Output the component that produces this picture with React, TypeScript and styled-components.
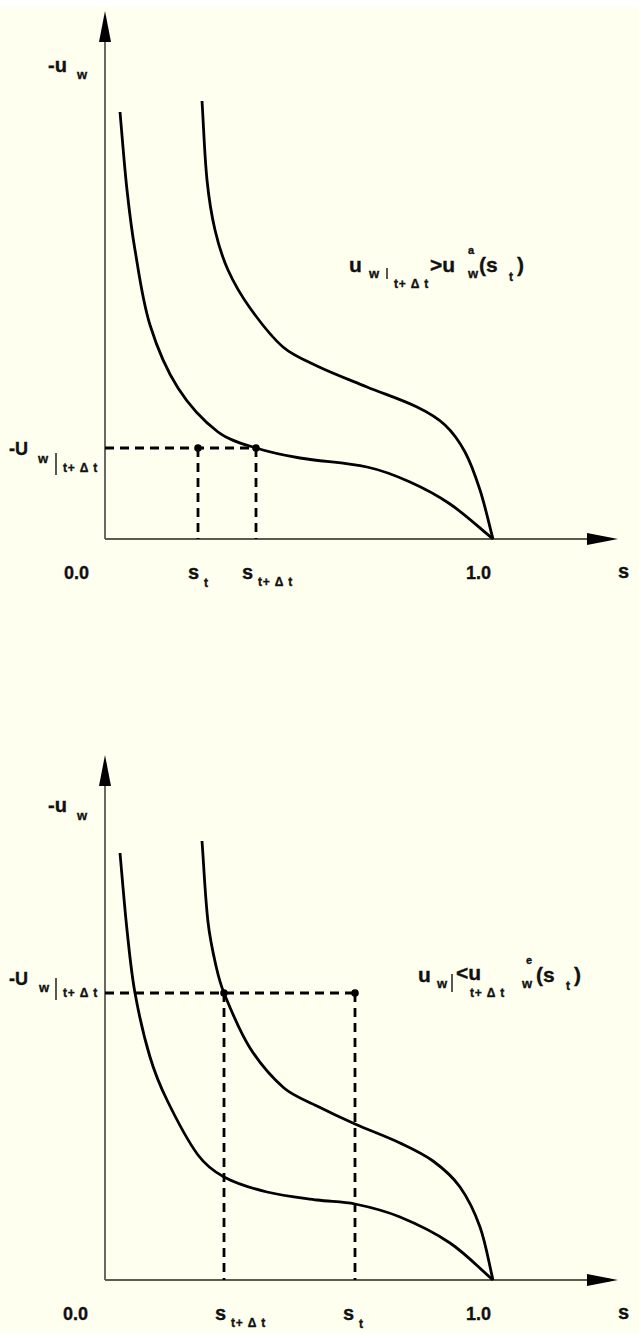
import styled, { createGlobalStyle } from "styled-components";

type Pt = [number, number];

const GlobalStyle = createGlobalStyle`
  body {
    margin: 0;
    background: #ffffff;
  }
`;

const Page = styled.div`
  margin-top: 7px;
  width: 639px;
  height: 1326px;
  overflow: hidden;
  background: #fffff0;
  display: flex;
  flex-direction: column;
`;

const Figure = styled.svg`
  display: block;
  flex: none;
`;

const Label = styled.text<{ $size: number; $spacing?: number }>`
  font-family: "Liberation Sans", Arial, sans-serif;
  font-weight: bold;
  font-size: ${(p) => p.$size}px;
  letter-spacing: ${(p) => p.$spacing ?? 0}px;
  fill: #111;
  stroke: #111;
  stroke-width: 0.35;
`;

const Curve = styled.path`
  fill: none;
  stroke: #000;
  stroke-width: 2.8;
  stroke-linejoin: round;
`;

const Guide = styled.line`
  stroke: #000;
  stroke-width: 2.8;
  stroke-dasharray: 9 6;
`;

const Axis = styled.line<{ $muted?: boolean }>`
  stroke: ${(p) => (p.$muted ? "#5c5c4c" : "#1a1a1a")};
  stroke-width: ${(p) => (p.$muted ? 2 : 1.3)};
`;

const Bar = styled.line`
  stroke: #111;
  stroke-width: 1.4;
`;

const dist = (a: Pt, b: Pt) => Math.hypot(b[0] - a[0], b[1] - a[1]);

// chord-length spline through the points, as cubic beziers
function smooth(pts: Pt[]) {
  const tangent = (i: number): Pt => {
    const a = pts[Math.max(i - 1, 0)];
    const b = pts[Math.min(i + 1, pts.length - 1)];
    const len = dist(a, pts[i]) + dist(pts[i], b);
    return [(b[0] - a[0]) / len, (b[1] - a[1]) / len];
  };
  let d = `M${pts[0][0]},${pts[0][1]}`;
  for (let i = 0; i < pts.length - 1; i++) {
    const p1 = pts[i];
    const p2 = pts[i + 1];
    const h = dist(p1, p2) / 3;
    const t1 = tangent(i);
    const t2 = tangent(i + 1);
    const c1: Pt = [p1[0] + t1[0] * h, p1[1] + t1[1] * h];
    const c2: Pt = [p2[0] - t2[0] * h, p2[1] - t2[1] * h];
    d += ` C${c1[0].toFixed(1)},${c1[1].toFixed(1)} ${c2[0].toFixed(1)},${c2[1].toFixed(1)} ${p2[0]},${p2[1]}`;
  }
  return d;
}

const AXIS_X = 105;

function Axes({ top, base }: { top: number; base: number }) {
  return (
    <g>
      <Axis x1={AXIS_X} y1={top + 28} x2={AXIS_X} y2={base} />
      <polygon points={`${AXIS_X},${top} ${AXIS_X - 6},${top + 31} ${AXIS_X + 6},${top + 31}`} fill="#000" />
      <Axis $muted x1={AXIS_X} y1={base} x2={590} y2={base} />
      <polygon points={`618,${base} 587,${base - 6} 587,${base + 6}`} fill="#000" />
    </g>
  );
}

function Dot({ x, y }: { x: number; y: number }) {
  return <circle cx={x} cy={y} r={3.8} fill="#000" />;
}

const upperLeft: Pt[] = [
  [120, 112], [127, 190], [135, 250], [150, 325], [178, 388], [218, 432],
  [256, 448], [300, 458], [367, 467], [410, 482], [450, 504], [493, 539],
];
const upperRight: Pt[] = [
  [202, 101], [207, 180], [215, 230], [228, 270], [250, 308], [283, 347],
  [317, 366], [367, 387], [417, 407], [445, 425], [465, 452], [480, 490],
  [493, 539],
];
const lowerLeft: Pt[] = [
  [120, 853], [127, 930], [135, 993], [150, 1057], [167, 1100], [198, 1155],
  [224, 1177], [267, 1192], [317, 1200], [355, 1204], [400, 1217], [450, 1243],
  [493, 1280],
];
const lowerRight: Pt[] = [
  [202, 841], [208, 922], [216, 966], [224, 993], [250, 1048], [284, 1088],
  [317, 1106], [355, 1124], [400, 1143], [433, 1161], [460, 1187], [480, 1227],
  [493, 1280],
];

function Sub({ x, y }: { x: number; y: number }) {
  return (
    <Label x={x} y={y} $size={12} $spacing={0.8}>
      t+ Δ t
    </Label>
  );
}

function UpperPlot() {
  return (
    <Figure width={639} height={741} viewBox="0 7 639 741">
      <Axes top={11} base={539} />
      <Curve d={smooth(upperLeft)} />
      <Curve d={smooth(upperRight)} />
      <Guide x1={AXIS_X} y1={448} x2={256} y2={448} />
      <Guide x1={198} y1={448} x2={198} y2={539} />
      <Guide x1={256} y1={448} x2={256} y2={539} />
      <Dot x={198} y={448} />
      <Dot x={256} y={448} />

      <Label x={48} y={72} $size={20}>-u</Label>
      <Label x={77} y={79} $size={13}>w</Label>

      <Label x={9} y={455} $size={18}>-U</Label>
      <Label x={38} y={463} $size={13}>w</Label>
      <Bar x1={56} y1={453} x2={56} y2={475} />
      <Sub x={63} y={472} />

      <Label x={64} y={579} $size={18}>0.0</Label>
      <Label x={188} y={579} $size={20}>s</Label>
      <Label x={204} y={587} $size={12}>t</Label>
      <Label x={242} y={579} $size={20}>s</Label>
      <Sub x={258} y={586} />
      <Label x={466} y={579} $size={18}>1.0</Label>
      <Label x={618} y={578} $size={20}>s</Label>

      <Label x={349} y={272} $size={21}>u</Label>
      <Label x={369} y={278} $size={13}>w</Label>
      <Bar x1={387} y1={268} x2={387} y2={279} />
      <Sub x={394} y={288} />
      <Label x={430} y={272} $size={21}>&gt;u</Label>
      <Label x={468} y={254} $size={11}>a</Label>
      <Label x={468} y={278} $size={13}>w</Label>
      <Label x={479} y={272} $size={21}>(s</Label>
      <Label x={509} y={281} $size={12}>t</Label>
      <Label x={517} y={272} $size={21}>)</Label>
    </Figure>
  );
}

function LowerPlot() {
  return (
    <Figure width={639} height={585} viewBox="0 748 639 585">
      <Axes top={755} base={1280} />
      <Curve d={smooth(lowerLeft)} />
      <Curve d={smooth(lowerRight)} />
      <Guide x1={AXIS_X} y1={993} x2={355} y2={993} />
      <Guide x1={224} y1={993} x2={224} y2={1280} />
      <Guide x1={355} y1={993} x2={355} y2={1280} />
      <Dot x={224} y={993} />
      <Dot x={355} y={993} />

      <Label x={48} y={812} $size={20}>-u</Label>
      <Label x={77} y={820} $size={13}>w</Label>

      <Label x={9} y={985} $size={18}>-U</Label>
      <Label x={39} y={992} $size={13}>w</Label>
      <Bar x1={56} y1={978} x2={56} y2={1000} />
      <Sub x={63} y={997} />

      <Label x={63} y={1320} $size={18}>0.0</Label>
      <Label x={215} y={1320} $size={20}>s</Label>
      <Sub x={231} y={1327} />
      <Label x={343} y={1320} $size={20}>s</Label>
      <Label x={359} y={1328} $size={12}>t</Label>
      <Label x={466} y={1320} $size={18}>1.0</Label>
      <Label x={618} y={1319} $size={20}>s</Label>

      <Label x={418} y={982} $size={21}>u</Label>
      <Label x={437} y={988} $size={13}>w</Label>
      <Bar x1={452} y1={974} x2={452} y2={992} />
      <Label x={456} y={980} $size={21}>&lt;u</Label>
      <Sub x={470} y={997} />
      <Label x={526} y={964} $size={11}>e</Label>
      <Label x={522} y={988} $size={13}>w</Label>
      <Label x={536} y={982} $size={21}>(s</Label>
      <Label x={566} y={990} $size={12}>t</Label>
      <Label x={574} y={982} $size={21}>)</Label>
    </Figure>
  );
}

export default function App() {
  return (
    <>
      <GlobalStyle />
      <Page>
        <UpperPlot />
        <LowerPlot />
      </Page>
    </>
  );
}
